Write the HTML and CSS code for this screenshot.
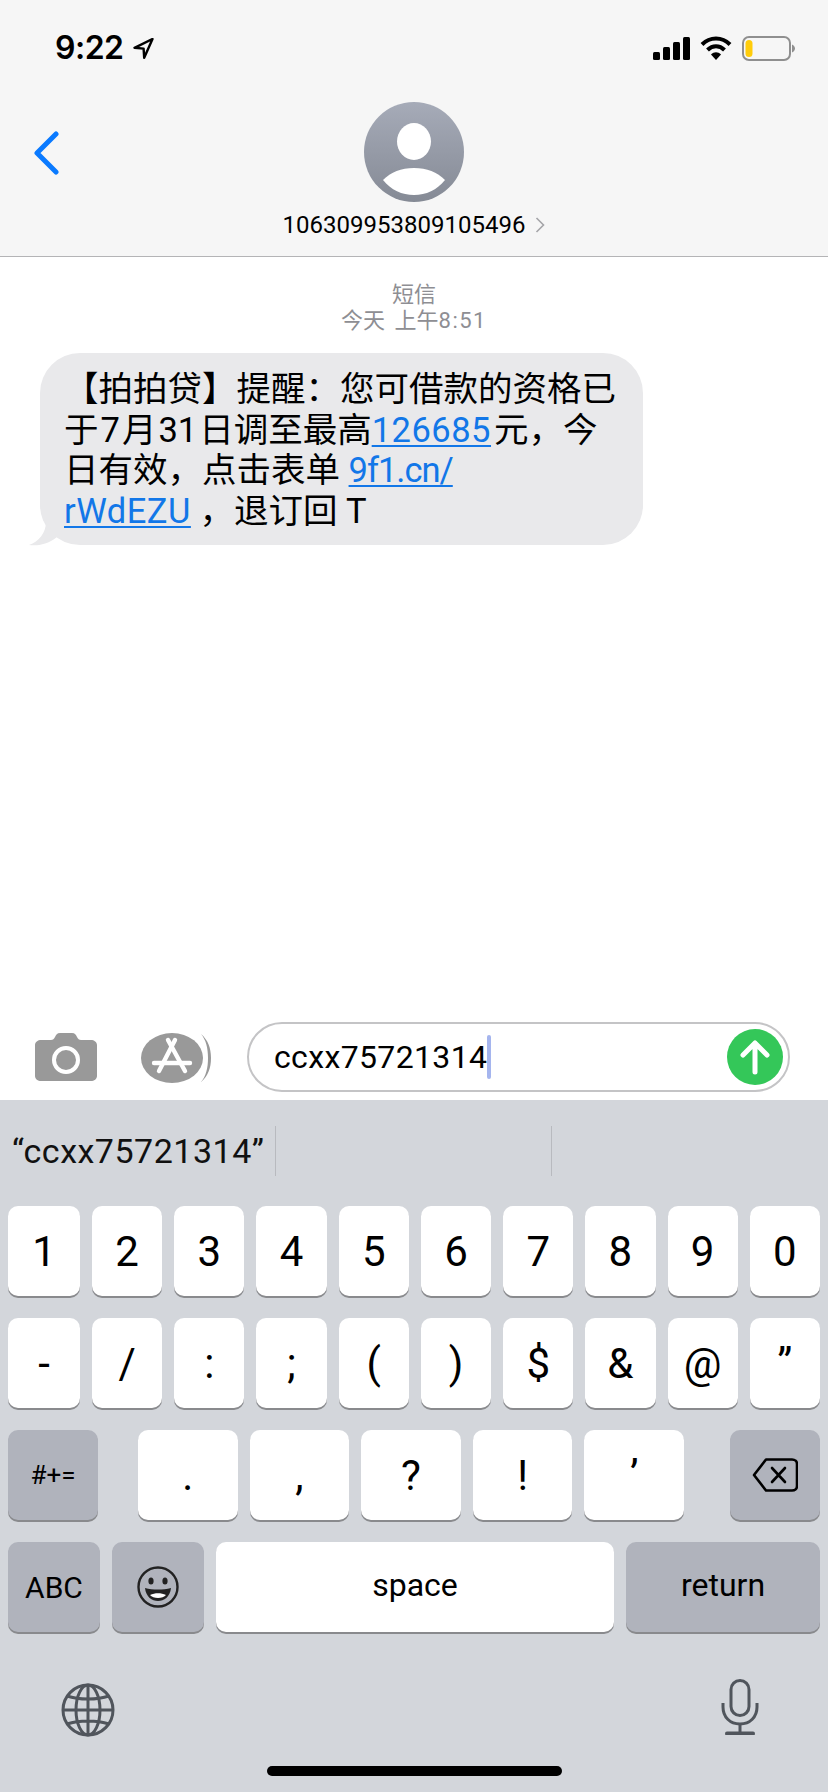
FILE: index.html
```html
<!DOCTYPE html>
<html lang="zh">
<head>
<meta charset="utf-8">
<title>短信</title>
<link rel="stylesheet" href="styles.css">
</head>
<body>
<div class="phone">
  <header class="top">
    <div class="status">
      <div class="status-left">
        <span class="time">9:22</span>
        <svg class="loc" width="21" height="21" viewBox="0 0 21 21"><path d="M19.500 1 L1.500 9.800 L10.600 10.600 L11.200 19.800 Z" fill="none" stroke="#000" stroke-width="2.400" stroke-linejoin="round"/></svg>
      </div>
      <div class="status-right">
        <svg width="37" height="23" viewBox="0 0 37 23"><rect x="0" y="15" width="7" height="8" rx="1.500"/><rect x="10" y="10" width="7" height="13" rx="1.500"/><rect x="20" y="5" width="7" height="18" rx="1.500"/><rect x="30" y="0" width="7" height="23" rx="1.500"/></svg>
        <svg width="32" height="24" viewBox="0 0 32 24"><path d="M2 8.500 C10 0.500 22 0.500 30 8.500" fill="none" stroke="#000" stroke-width="4"/><path d="M7.500 14 C12.500 9 19.500 9 24.500 14" fill="none" stroke="#000" stroke-width="4"/><path d="M11 18.500 L16 24 L21 18.500 C18 15.500 14 15.500 11 18.500 Z"/></svg>
        <svg width="53" height="25" viewBox="0 0 53 25"><rect x="1" y="1" width="47" height="23" rx="6" fill="none" stroke="#8f8f8f" stroke-width="2"/><rect x="3.500" y="4" width="7" height="17" rx="3.500" fill="#ffcc0a"/><path d="M50 8.500 C52 9.500 53 11 53 12.500 C53 14 52 15.500 50 16.500 Z" fill="#8f8f8f"/></svg>
      </div>
    </div>
    <div class="nav">
      <div class="nav-side">
        <svg width="28" height="46" viewBox="0 0 28 46"><path d="M24 3 L5 22 L24 41" fill="none" stroke="#0a7aff" stroke-width="5" stroke-linecap="round" stroke-linejoin="round"/></svg>
      </div>
      <div class="contact">
        <svg class="avatar" width="100" height="100" viewBox="0 0 100 100">
          <defs><linearGradient id="av" x1="0" y1="0" x2="0" y2="1"><stop offset="0" stop-color="#a6abb8"/><stop offset="1" stop-color="#858a95"/></linearGradient></defs>
          <circle cx="50" cy="50" r="50" fill="url(#av)"/>
          <ellipse cx="50" cy="39.500" rx="17" ry="18.500" fill="#fff"/>
          <path d="M19 78 C27 70 37 66 50 66 C63 66 73 70 81 78 C73 88 62 93 50 93 C38 93 27 88 19 78 Z" fill="#fff"/>
        </svg>
        <div class="contact-name"><span>106309953809105496</span><svg width="10" height="16" viewBox="0 0 10 16"><path d="M1.500 1 L8.500 8 L1.500 15" fill="none" stroke="#a4a4a8" stroke-width="1.600"/></svg></div>
      </div>
      <div class="nav-side"></div>
    </div>
  </header>

  <main class="messages">
    <div class="stamp">
      <div>短信</div>
      <div class="stamp-time">今天 上午<span class="stamp-num">8:51</span></div>
    </div>
    <div class="bubble">
      <svg class="tail" width="28" height="24" viewBox="0 0 28 24"><path d="M17 0 C17 10 10 20 0 23 C8 24 18 23 28 15 Z" fill="#e9e9eb"/></svg>
      <p class="bubble-text">【拍拍贷】提醒：您可借款的资格已<br>于<span class="lat">7</span>月<span class="lat">31</span>日调至最高<a class="link num">126685</a>元，今<br>日有效，点击表单 <a class="link tight">9f1.cn/</a><br><a class="link wide">rWdEZU</a> ，退订回 T</p>
    </div>
  </main>

  <div class="composer">
    <svg class="cam" width="62" height="48" viewBox="0 0 62 48"><path d="M6 7 H16 C18 7 19 6 20 4 C21 2 22 0 25 0 H37 C40 0 41 2 42 4 C43 6 44 7 46 7 H56 C59 7 62 9 62 12 V43 C62 46 59 48 56 48 H6 C3 48 0 46 0 43 V12 C0 9 3 7 6 7 Z" fill="#999"/><circle cx="31" cy="27" r="12" fill="none" stroke="#fff" stroke-width="4"/></svg>
    <svg class="store" width="71" height="52" viewBox="0 0 71 52"><path d="M60 2 C67 8 70 16 70 26 C70 36 67 44 60 50 C65 44 67 36 67 26 C67 16 65 8 60 2 Z" fill="#999"/><ellipse cx="31" cy="26" rx="31" ry="25" fill="#999"/><g stroke="#fff" stroke-width="4.400" stroke-linecap="round" fill="none"><path d="M34 8 L18 39"/><path d="M27 8 L44 39"/><path d="M13 31 H49"/></g></svg>
    <div class="field">
      <span class="field-text">ccxx75721314</span><span class="caret"></span>
      <svg class="send" width="56" height="56" viewBox="0 0 56 56"><circle cx="28" cy="28" r="28" fill="#34c759"/><path d="M28 43 V14 M16 26 L28 14 L40 26" fill="none" stroke="#fff" stroke-width="5" stroke-linecap="round" stroke-linejoin="round"/></svg>
    </div>
  </div>

  <section class="keyboard">
    <div class="suggest">
      <div class="sug sug-first">“ccxx75721314”</div>
      <div class="sug"></div>
      <div class="sug sug-last"></div>
    </div>
    <div class="rows">
      <div class="row row-keys">
        <div class="key">1</div><div class="key">2</div><div class="key">3</div><div class="key">4</div><div class="key">5</div><div class="key">6</div><div class="key">7</div><div class="key">8</div><div class="key">9</div><div class="key">0</div>
      </div>
      <div class="row row-keys">
        <div class="key">-</div><div class="key">/</div><div class="key">:</div><div class="key">;</div><div class="key">(</div><div class="key">)</div><div class="key">$</div><div class="key">&amp;</div><div class="key">@</div><div class="key">”</div>
      </div>
      <div class="row row-mid">
        <div class="key dark small side">#+=</div>
        <div class="mid">
          <div class="key">.</div><div class="key">,</div><div class="key">?</div><div class="key">!</div><div class="key">’</div>
        </div>
        <div class="key dark side">
          <svg width="46" height="34" viewBox="0 0 46 34"><path d="M14 1.500 H40 C43 1.500 45 3.500 45 6 V28 C45 30.500 43 32.500 40 32.500 H14 L2 17 Z" fill="none" stroke="#000" stroke-width="2.600" stroke-linejoin="round"/><path d="M20 10 L33 24 M33 10 L20 24" stroke="#000" stroke-width="2.600" stroke-linecap="round"/></svg>
        </div>
      </div>
      <div class="row row-bottom">
        <div class="key dark abc">ABC</div>
        <div class="key dark">
          <svg width="42" height="42" viewBox="0 0 42 42"><circle cx="21" cy="21" r="19.500" fill="none" stroke="#222" stroke-width="2.400"/><ellipse cx="14" cy="15" rx="2.600" ry="3.600" fill="#222"/><ellipse cx="28" cy="15" rx="2.600" ry="3.600" fill="#222"/><path d="M8 22 C16 24 26 24 34 22 C33 31 27 35 21 35 C15 35 9 31 8 22 Z" fill="#222"/><path d="M13 29 C18 26.500 24 26.500 29 29 C26 33 16 33 13 29 Z" fill="#fff"/></svg>
        </div>
        <div class="key word">space</div>
        <div class="key dark word">return</div>
      </div>
    </div>
    <div class="kb-bottom">
      <svg class="globe" width="54" height="54" viewBox="0 0 54 54"><g fill="none" stroke="#50555c" stroke-width="3"><circle cx="27" cy="27" r="25"/><ellipse cx="27" cy="27" rx="12" ry="25"/><path d="M27 2 V52 M2 27 H52 M6 13 C18 17 36 17 48 13 M6 41 C18 37 36 37 48 41"/></g></svg>
      <svg class="mic" width="38" height="56" viewBox="0 0 38 56"><g fill="none" stroke="#50555c" stroke-width="3"><rect x="10" y="1.500" width="18" height="35" rx="9"/><path d="M2 24 V28 C2 38 9 45 19 45 C29 45 36 38 36 28 V24"/><path d="M19 45 V54"/><path d="M6 54.500 H32" stroke-width="4" stroke-linecap="round"/></g></svg>
    </div>
    <div class="home-bar"></div>
  </section>
</div>
</body>
</html>
```
FILE: styles.css
```css
* { box-sizing: border-box; margin: 0; padding: 0; }
html, body { width: 828px; height: 1792px; overflow: hidden; background: #fff; }
body { font-family: Roboto, "Noto Sans CJK SC", sans-serif; color: #000; }

.phone { width: 828px; height: 1792px; display: flex; flex-direction: column; }

.top { height: 257px; background: #f6f6f6; border-bottom: 1px solid #b4b4b6; display: flex; flex-direction: column; }
.status { height: 97px; padding: 32px 33px 0 55px; display: flex; justify-content: space-between; align-items: flex-start; }
.status-left { display: flex; align-items: center; gap: 9px; height: 32px; }
.time { font-family: Inter, sans-serif; font-size: 32px; font-weight: 600; letter-spacing: -0.5px; line-height: 32px; }
.status-right { display: flex; align-items: center; gap: 10px; height: 32px; }
.status-right svg { display: block; }

.nav { flex: 1; display: grid; grid-template-columns: 1fr auto 1fr; padding: 5px 0 0; }
.nav-side { padding: 29px 0 0 32px; }
.nav-side svg { display: block; }
.contact { display: flex; flex-direction: column; align-items: center; }
.avatar { display: block; }
.contact-name { display: flex; align-items: center; gap: 10px; height: 28px; margin-top: 9px; font-size: 24px; line-height: 28px; white-space: nowrap; }

.messages { flex: 1; min-height: 0; display: flex; flex-direction: column; }
.stamp { padding-top: 25px; height: 96px; text-align: center; color: #8e8e93; font-size: 22px; line-height: 26px; }
.stamp-time { word-spacing: 4px; }
.stamp-num { letter-spacing: 1.500px; }
.bubble { position: relative; margin-left: 40px; width: 603px; height: 192px; background: #e9e9eb; border-radius: 40px; padding: 16px 0 0 24px; }
.tail { position: absolute; left: -11px; bottom: -1px; }
.bubble-text { font-size: 34.500px; line-height: 40.500px; white-space: nowrap; }
.lat { padding: 0 2px; }
.link { color: #1277e8; text-decoration: underline; text-decoration-thickness: 2px; text-underline-offset: 3px; }
.num { padding-right: 3px; letter-spacing: 0.500px; }
.tight { letter-spacing: -1px; }
.wide { letter-spacing: 0.500px; }

.composer { height: 78px; display: flex; align-items: flex-start; padding: 0 38px 0 35px; }
.cam { margin-top: 11px; flex: none; }
.store { margin: 10px 0 0 44px; flex: none; }
.field { position: relative; margin-left: 35px; flex: 1; height: 70px; border: 2px solid #c4c4c6; border-radius: 35px; display: flex; align-items: center; padding-left: 25px; font-size: 32px; }
.field-text { line-height: 40px; letter-spacing: 0.350px; }
.caret { width: 4px; height: 44px; background: #a5b5ee; border-radius: 2px; }
.send { position: absolute; right: 5px; top: 5px; }

.keyboard { position: relative; flex: none; height: 692px; background: #d3d6db; display: flex; flex-direction: column; }
.suggest { height: 106px; padding-top: 26px; display: flex; align-items: flex-start; }
.sug { width: 276px; height: 50px; border-right: 1px solid #b8babf; font-size: 34px; line-height: 50px; padding-left: 12px; white-space: nowrap; color: #111; letter-spacing: 0.500px; }
.sug-last { border-right: 0; }

.rows { display: flex; flex-direction: column; gap: 22px; padding: 0 8px; }
.row { display: flex; gap: 12px; height: 90px; }
.row-keys .key:first-child { flex: 0 0 72px; }
.key { flex: 1; min-width: 0; background: #fff; border-radius: 10px; box-shadow: 0 2px 0 #898a8d; display: flex; align-items: center; justify-content: center; font-size: 42px; font-weight: 400; color: #000; }
.key svg { display: block; }
.dark { background: #b0b3bc; }
.small { font-size: 26px; font-weight: 400; }
.row-mid { justify-content: space-between; }
.side { flex: none; width: 90px; }
.mid { display: flex; gap: 12px; width: 546px; margin-right: 6px; }
.row-bottom { display: grid; grid-template-columns: 92px 92px 1fr 194px; }
.abc { font-size: 30px; font-weight: 400; }
.word { font-size: 32px; font-weight: 400; padding-bottom: 4px; }

.kb-bottom { display: flex; justify-content: space-between; align-items: flex-start; padding: 47px 69px 0 61px; }
.globe { margin-top: 4px; }
.home-bar { position: absolute; left: 267px; bottom: 16px; width: 295px; height: 10px; border-radius: 5px; background: #000; }
```
